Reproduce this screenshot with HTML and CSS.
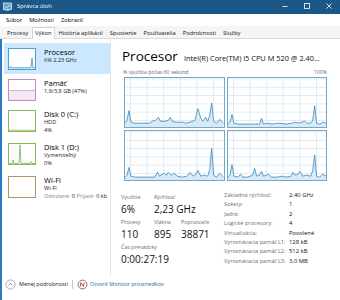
FILE: index.html
```html
<!DOCTYPE html>
<html lang="sk">
<head>
<meta charset="utf-8">
<title>Správca úloh</title>
<link rel="stylesheet" href="styles.css">
</head>
<body>
<div class="win">
  <div class="titlebar">
    <svg class="appicon" viewBox="0 0 9 9"><rect x="0.5" y="1" width="8" height="6.5" fill="#5d9fd4" stroke="#e6eef6" stroke-width="0.8"/><polyline points="1.3,6.2 3,4.6 4.3,5.6 6,3 7.7,4.2" fill="none" stroke="#dff3d0" stroke-width="0.7"/><rect x="2.5" y="7.6" width="4" height="1" fill="#c8d6e4"/></svg>
    <span class="title">Správca úloh</span>
    <div class="controls">
      <svg viewBox="0 0 22 12"><line x1="8.5" y1="6.5" x2="13.5" y2="6.5" stroke="#fff" stroke-width="0.8"/></svg>
      <svg viewBox="0 0 22 12"><rect x="8.5" y="3.5" width="5" height="5" fill="none" stroke="#fff" stroke-width="0.8"/></svg>
      <svg viewBox="0 0 22 12"><path d="M8.3 3.3 L13.7 8.7 M13.7 3.3 L8.3 8.7" stroke="#fff" stroke-width="0.8"/></svg>
    </div>
  </div>
  <div class="menubar"><span>Súbor</span><span>Možnosti</span><span>Zobraziť</span></div>
  <div class="tabs">
    <span class="tab">Procesy</span><span class="tab active">Výkon</span><span class="tab">História aplikácií</span><span class="tab">Spustenie</span><span class="tab">Používatelia</span><span class="tab">Podrobnosti</span><span class="tab">Služby</span>
  </div>
  <div class="content">
    <div class="body">
      <div class="sidebar">
        <div class="item sel">
          <div class="thumb cpu"><svg viewBox="0 0 26 20" preserveAspectRatio="none"><polygon points="0,19 2,17.5 3,19 7,18.6 9,19 12,18.5 15,19 18,18.4 20,19 22,18 23,9 24,18.6 26,19 26,20 0,20" fill="#d7e8f4"/><polyline points="0,19 2,17.5 3,19 7,18.6 9,19 12,18.5 15,19 18,18.4 20,19 22,18 23,9 24,18.6 26,19" fill="none" stroke="#3a8cc0" stroke-width="0.7"/></svg></div>
          <div class="itxt"><div class="iname">Procesor</div><div class="isub">6% 2,23 GHz</div></div>
        </div>
        <div class="item">
          <div class="thumb mem"><svg viewBox="0 0 26 20" preserveAspectRatio="none"><rect x="0" y="10.6" width="26" height="9.4" fill="#f4e8f4"/><line x1="0" y1="10.6" x2="26" y2="10.6" stroke="#b57ab5" stroke-width="0.6"/></svg></div>
          <div class="itxt"><div class="iname">Pamäť</div><div class="isub">1,8/3,8 GB (47%)</div></div>
        </div>
        <div class="item">
          <div class="thumb disk"><svg viewBox="0 0 26 20" preserveAspectRatio="none"><polyline points="0,19.3 4,19.3 5,18.5 6,19.3 26,19.3" fill="none" stroke="#6aac3c" stroke-width="0.7"/></svg></div>
          <div class="itxt"><div class="iname">Disk 0 (C:)</div><div class="isub">HDD</div><div class="isub">4%</div></div>
        </div>
        <div class="item">
          <div class="thumb disk"><svg viewBox="0 0 26 20" preserveAspectRatio="none"><polygon points="0,19.5 3,19.5 4,16 5,19.5 9,19.5 10,18 11,1 12,19.5 21,19.5 22,17.5 23,19.5 26,19.5 26,20 0,20" fill="#eef6e8"/><polyline points="0,19.5 3,19.5 4,16 5,19.5 9,19.5 10,18 11,1 12,19.5 21,19.5 22,17.5 23,19.5 26,19.5" fill="none" stroke="#6aac3c" stroke-width="0.7"/></svg></div>
          <div class="itxt"><div class="iname">Disk 1 (D:)</div><div class="isub">Vymeniteľný</div><div class="isub">0%</div></div>
        </div>
        <div class="item">
          <div class="thumb wifi"></div>
          <div class="itxt"><div class="iname">Wi-Fi</div><div class="isub">Wi-Fi</div><div class="isub"><span class="muted">Odoslané:</span> 0 <span class="muted">Prijaté:</span> 0 kb</div></div>
        </div>
      </div>
      <div class="main">
        <div class="head"><span class="h1">Procesor</span><span class="model">Intel(R) Core(TM) i5 CPU M 520 @ 2.40…</span></div>
        <div class="axis"><span>% využitia počas 60 sekúnd</span><span>100%</span></div>
        <div class="graphs">
          <div class="g"><svg viewBox="0 0 100 51" preserveAspectRatio="none"><polygon class="f" points="0,47 2,44 4,34 6,46 10,47 25,47 28,45 31,44 34,41 36,45 41,45 44,44 46,41 48,45 51,46 58,46 62,47 66,46 71,44 74,32 77,42 79,45 82,41 84,45 86,39 88,26 90,45 93,47 96,43 99,46 100,47 100,51 0,51"/><polyline class="l" points="0,47 2,44 4,34 6,46 10,47 25,47 28,45 31,44 34,41 36,45 41,45 44,44 46,41 48,45 51,46 58,46 62,47 66,46 71,44 74,32 77,42 79,45 82,41 84,45 86,39 88,26 90,45 93,47 96,43 99,46 100,47"/></svg></div>
          <div class="g"><svg viewBox="0 0 100 51" preserveAspectRatio="none"><polygon class="f" points="0,48 2,46 4,38 6,47 10,48 32,48 34,42 36,48 40,47 45,48 50,47 60,48 65,47 68,46 72,47 75,46 78,45 80,47 84,47 86,44 88,29 90,47 93,48 96,46 100,47 100,51 0,51"/><polyline class="l" points="0,48 2,46 4,38 6,47 10,48 32,48 34,42 36,48 40,47 45,48 50,47 60,48 65,47 68,46 72,47 75,46 78,45 80,47 84,47 86,44 88,29 90,47 93,48 96,46 100,47"/></svg></div>
          <div class="g"><svg viewBox="0 0 100 51" preserveAspectRatio="none"><polygon class="f" points="0,48 2,46 4,38 6,47 10,48 30,48 33,43 35,47 38,45 40,44 42,46 44,43 47,46 50,44 53,47 58,48 63,47 66,43 69,47 72,45 74,41 77,47 80,46 84,47 86,40 88,18 90,46 93,48 96,44 99,47 100,48 100,51 0,51"/><polyline class="l" points="0,48 2,46 4,38 6,47 10,48 30,48 33,43 35,47 38,45 40,44 42,46 44,43 47,46 50,44 53,47 58,48 63,47 66,43 69,47 72,45 74,41 77,47 80,46 84,47 86,40 88,18 90,46 93,48 96,44 99,47 100,48"/></svg></div>
          <div class="g"><svg viewBox="0 0 100 51" preserveAspectRatio="none"><polygon class="f" points="0,48 2,46 4,35 6,47 10,48 13,45 15,48 20,48 25,46 27,39 29,47 32,46 34,42 36,47 39,46 41,45 44,48 50,48 55,47 60,48 64,47 66,43 68,46 71,45 73,42 76,47 80,46 84,47 86,41 88,25 90,47 93,48 96,45 100,47 100,51 0,51"/><polyline class="l" points="0,48 2,46 4,35 6,47 10,48 13,45 15,48 20,48 25,46 27,39 29,47 32,46 34,42 36,47 39,46 41,45 44,48 50,48 55,47 60,48 64,47 66,43 68,46 71,45 73,42 76,47 80,46 84,47 86,41 88,25 90,47 93,48 96,45 100,47"/></svg></div>
        </div>
        <div class="stats">
          <div class="left">
            <div class="srow">
              <div class="c1"><div class="lbl">Využitie</div><div class="val">6%</div></div>
              <div class="c2"><div class="lbl">Rýchlosť</div><div class="val">2,23 GHz</div></div>
            </div>
            <div class="srow">
              <div class="c1"><div class="lbl">Procesy</div><div class="val">110</div></div>
              <div class="c2"><div class="lbl">Vlákna</div><div class="val">895</div></div>
              <div class="c3"><div class="lbl">Popisovače</div><div class="val">38871</div></div>
            </div>
            <div class="srow">
              <div class="c1"><div class="lbl">Čas prevádzky</div><div class="val">0:00:27:19</div></div>
            </div>
          </div>
          <div class="spec">
            <div class="sr"><span class="sk">Základná rýchlosť:</span><span class="sv">2,40 GHz</span></div>
            <div class="sr"><span class="sk">Sokety:</span><span class="sv">1</span></div>
            <div class="sr"><span class="sk">Jadrá:</span><span class="sv">2</span></div>
            <div class="sr"><span class="sk">Logické procesory:</span><span class="sv">4</span></div>
            <div class="sr"><span class="sk">Virtualizácia:</span><span class="sv">Povolené</span></div>
            <div class="sr"><span class="sk">Vyrovnávacia pamäť L1:</span><span class="sv">128 kB</span></div>
            <div class="sr"><span class="sk">Vyrovnávacia pamäť L2:</span><span class="sv">512 kB</span></div>
            <div class="sr"><span class="sk">Vyrovnávacia pamäť L3:</span><span class="sv">3,0 MB</span></div>
          </div>
        </div>
      </div>
    </div>
    <div class="footer">
      <svg class="ficon" viewBox="0 0 11 11"><circle cx="5.5" cy="5.5" r="4.6" fill="#fff" stroke="#8a8a8a" stroke-width="0.7"/><polyline points="3.4,6.4 5.5,4.3 7.6,6.4" fill="none" stroke="#555" stroke-width="0.7"/></svg>
      <span class="less">Menej podrobností</span>
      <span class="sep"></span>
      <svg class="ficon" viewBox="0 0 11 11"><circle cx="5.5" cy="5.5" r="4.4" fill="#fff" stroke="#8b7565" stroke-width="1"/><path d="M3.4 7.6 L3.9 3.6 L6.3 7.4 L7.3 3.4" fill="none" stroke="#c0392b" stroke-width="0.9"/></svg>
      <span class="link">Otvoriť Monitor prostriedkov</span>
    </div>
  </div>
</div>
</body>
</html>
```

FILE: styles.css
```css
* { box-sizing: border-box; margin: 0; padding: 0; }
html, body { width: 340px; height: 300px; overflow: hidden; background: #fff; }
body { font-family: "Open Sans", "Noto Sans", sans-serif; color: #000; }

.win { display: flex; flex-direction: column; height: 300px; }

.titlebar {
  height: 14px; background: #1b5887; color: #fff;
  display: flex; align-items: center; padding: 0 0 2px 3px;
  font-size: 5.8px;
}
.appicon { width: 9px; height: 9px; margin-right: 5px; margin-top: 1px; }
.title { flex: 1; }
.controls { display: flex; align-self: flex-start; margin-top: 0; }
.controls svg { width: 22px; height: 12px; display: block; }

.menubar {
  height: 12px; display: flex; align-items: center; gap: 7px;
  padding-left: 6px; font-size: 5.8px; background: #fff;
}

.tabs {
  height: 13px; display: flex; align-items: flex-end; padding-left: 4px;
  background: #f5f5f5; border-bottom: 1px solid #dadada; font-size: 5.8px;
}
.tab {
  height: 11px; line-height: 11px; padding: 0 2px; margin-right: 1px;
  border: 1px solid transparent; border-bottom: none; color: #111;
}
.tab.active {
  background: #fff; border-color: #d4d4d4; height: 12px; margin-bottom: -1px;
}

.content { flex: 1; display: flex; flex-direction: column; border-left: 2px solid #2b7bc4; }
.body { flex: 1; display: flex; min-height: 0; }

.sidebar {
  width: 109px; border-right: 1px solid #e4e4e4; padding: 4px 0 0 2px;
}
.item { display: flex; gap: 8px; padding: 5px 4px 4px 4px; width: 106px; }
.item.sel { background: #cce8ff; }
.thumb { width: 28px; height: 22px; border: 1px solid #999; background: #fff; flex: none; }
.thumb svg { width: 100%; height: 100%; display: block; }
.thumb.cpu { border-color: #4f9fcf; }
.thumb.mem { border-color: #bf8ebf; }
.thumb.disk { border-color: #84b95c; }
.thumb.wifi { border-color: #b39468; }
.itxt { min-width: 0; }
.iname { font-size: 7.5px; line-height: 9px; color: #000; }
.isub { font-size: 5.6px; line-height: 7.5px; color: #222; white-space: nowrap; }
.muted { color: #888; }

.main { flex: 1; padding: 9px 13px 0 13px; min-width: 0; }
.head { display: flex; align-items: baseline; gap: 6px; line-height: 16px; margin-left: -2px; white-space: nowrap; }
.h1 { font-size: 13.5px; color: #000; }
.model { font-size: 7.4px; color: #111; overflow: hidden; }
.axis {
  display: flex; justify-content: space-between; font-size: 5.2px; line-height: 8px;
  color: #666; margin: 2px 0 1px -1px;
}
.graphs { display: grid; grid-template-columns: 1fr 1fr; grid-auto-rows: 51px; gap: 2px; }
.g {
  border: 1px solid #72a9cb; background-color: #fff;
  background-image: linear-gradient(to right, #dbebf5 1px, transparent 1px), linear-gradient(to bottom, #dbebf5 1px, transparent 1px);
  background-size: 16.6px 8.3px; background-position: 5px 0.5px;
}
.g svg { width: 100%; height: 100%; display: block; }
.g .f { fill: #d3e6f3; fill-opacity: 0.85; }
.g .l { fill: none; stroke: #3a88b9; stroke-width: 0.8; vector-effect: non-scaling-stroke; }

.stats { display: flex; margin: 11px 0 0 -3px; }
.left { width: 103px; flex: none; }
.srow { display: flex; }
.c1 { width: 33px; flex: none; white-space: nowrap; }
.c2 { width: 27px; flex: none; white-space: nowrap; }
.c3 { white-space: nowrap; }
.lbl { font-size: 5.4px; line-height: 10px; color: #6e6e6e; }
.val { font-size: 10px; line-height: 15px; color: #111; }

.spec { padding-top: 0; margin-top: -1px; }
.sr { display: flex; line-height: 9.4px; white-space: nowrap; }
.sk { width: 65px; flex: none; font-size: 5.6px; color: #6e6e6e; }
.sv { font-size: 5.9px; color: #111; }

.footer {
  height: 24px; display: flex; align-items: flex-start; padding: 3px 0 0 3px;
  font-size: 5.5px; line-height: 10px;
}
.ficon { width: 11px; height: 11px; display: block; flex: none; }
.less { margin-left: 3px; color: #1a1a1a; }
.sep { width: 1px; height: 9px; background: #c8c8c8; margin: 1px 4px 0 4px; }
.link { margin-left: 2px; color: #1c67b0; }
```
